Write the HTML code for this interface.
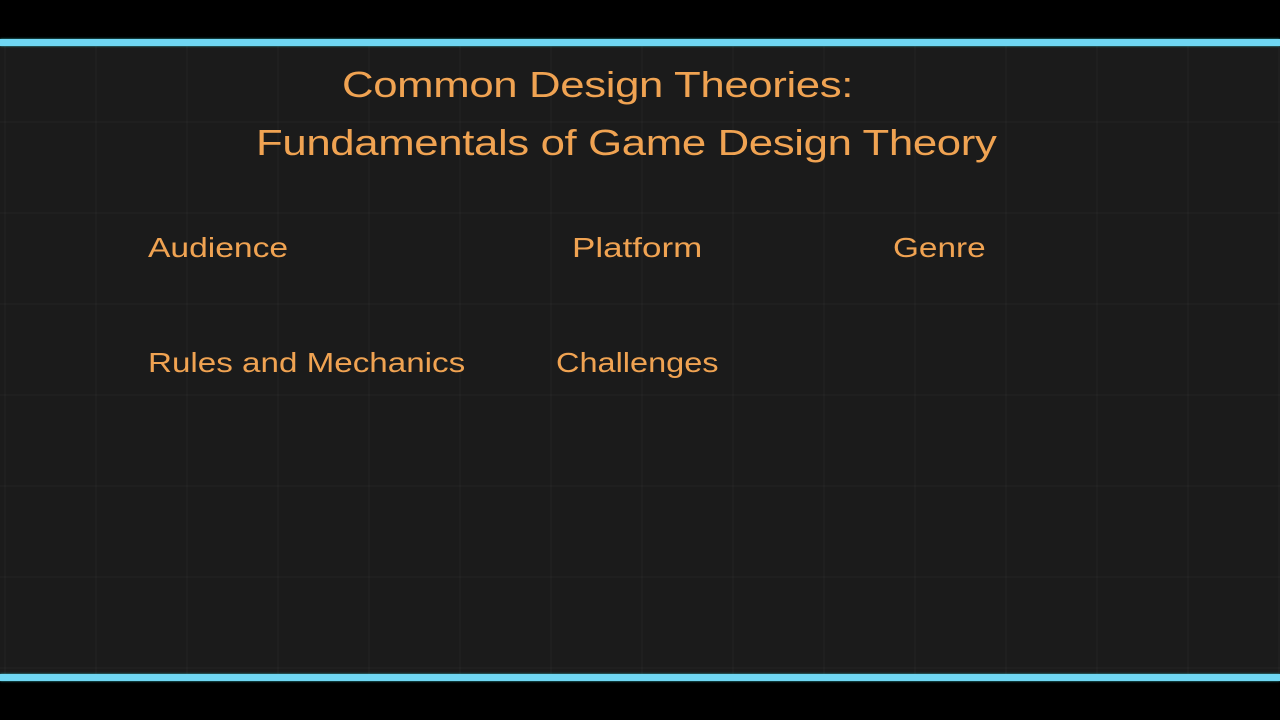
<!DOCTYPE html>
<html><head><style>
html,body{margin:0;padding:0}
body{width:1280px;height:720px;background:#000;position:relative;overflow:hidden;font-family:"Liberation Sans",sans-serif;color:#f0a352}
.bg{position:absolute;left:0;top:46px;width:1280px;height:628px;background-color:#1b1b1b;
background-image:linear-gradient(90deg,rgba(255,255,255,0.02) 2px,transparent 2px),linear-gradient(0deg,rgba(255,255,255,0.02) 2px,transparent 2px);
background-size:91px 91px;background-position:4px 0,0 -14px}
.bar{position:absolute;left:0;width:1280px;height:7px;background:#6fd6f2;box-shadow:0 0 2px #3aa}
.t{position:absolute;white-space:nowrap;line-height:1;transform-origin:left}
.h{font-size:36px;letter-spacing:-0.3px;transform:scaleX(1.215)}
.s{font-size:28px;transform:scaleX(1.19)}
</style></head><body>
<div class="bg"></div>
<div class="bar" style="top:39px"></div>
<div class="bar" style="top:674px"></div>
<div class="t h" style="left:342px;top:67px">Common Design Theories:</div>
<div class="t h" style="left:256px;top:125px">Fundamentals of Game Design Theory</div>
<div class="t s" style="left:148px;top:234px;transform:scaleX(1.2)">Audience</div>
<div class="t s" style="left:572px;top:234px;transform:scaleX(1.25)">Platform</div>
<div class="t s" style="left:893px;top:234px">Genre</div>
<div class="t s" style="left:148px;top:349px;transform:scaleX(1.185)">Rules and Mechanics</div>
<div class="t s" style="left:556px;top:349px;transform:scaleX(1.16)">Challenges</div>
</body></html>
